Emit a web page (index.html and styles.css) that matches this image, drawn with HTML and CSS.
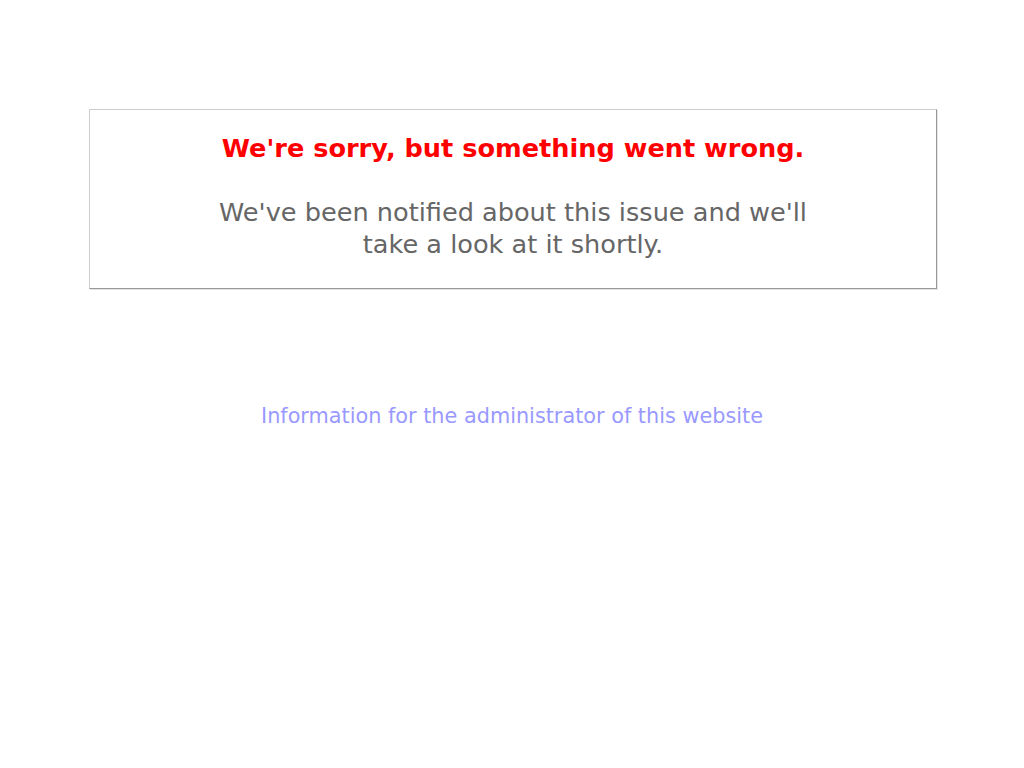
FILE: index.html
```html
<!DOCTYPE html>
<html>
<head>
<meta charset="utf-8">
<title>We're sorry, but something went wrong (500)</title>
<link rel="stylesheet" href="styles.css">
</head>
<body>
<div class="dialog">
  <h1 class="title">We're sorry, but something went wrong.</h1>
  <p class="message">We've been notified about this issue and we'll<br>take a look at it shortly.</p>
</div>
<p class="admin"><a class="admin-link" href="#">Information for the administrator of this website</a></p>
</body>
</html>
```
FILE: styles.css
```css
html, body {
  margin: 0;
  padding: 0;
  background: #fff;
}
body {
  font-family: "DejaVu Sans", sans-serif;
  text-align: center;
}
.dialog {
  margin: 109px 87px 0 89px;
  height: 178px;
  border: 1px solid #ccc;
  border-right-color: #999;
  border-bottom-color: #999;
  box-shadow: 1px 1px 0 #e4e4e4;
  padding: 0;
}
.title {
  margin: 22px 0 0;
  font-size: 25.6px;
  line-height: 32px;
  color: #f00;
  font-weight: bold;
}
.message {
  margin: 32px 0 0;
  font-size: 25.6px;
  line-height: 32px;
  color: #666;
}
.admin {
  margin: 113px 0 0;
  font-size: 20.8px;
  line-height: 28px;
}
.admin-link {
  color: #99f;
  text-decoration: none;
}
```
